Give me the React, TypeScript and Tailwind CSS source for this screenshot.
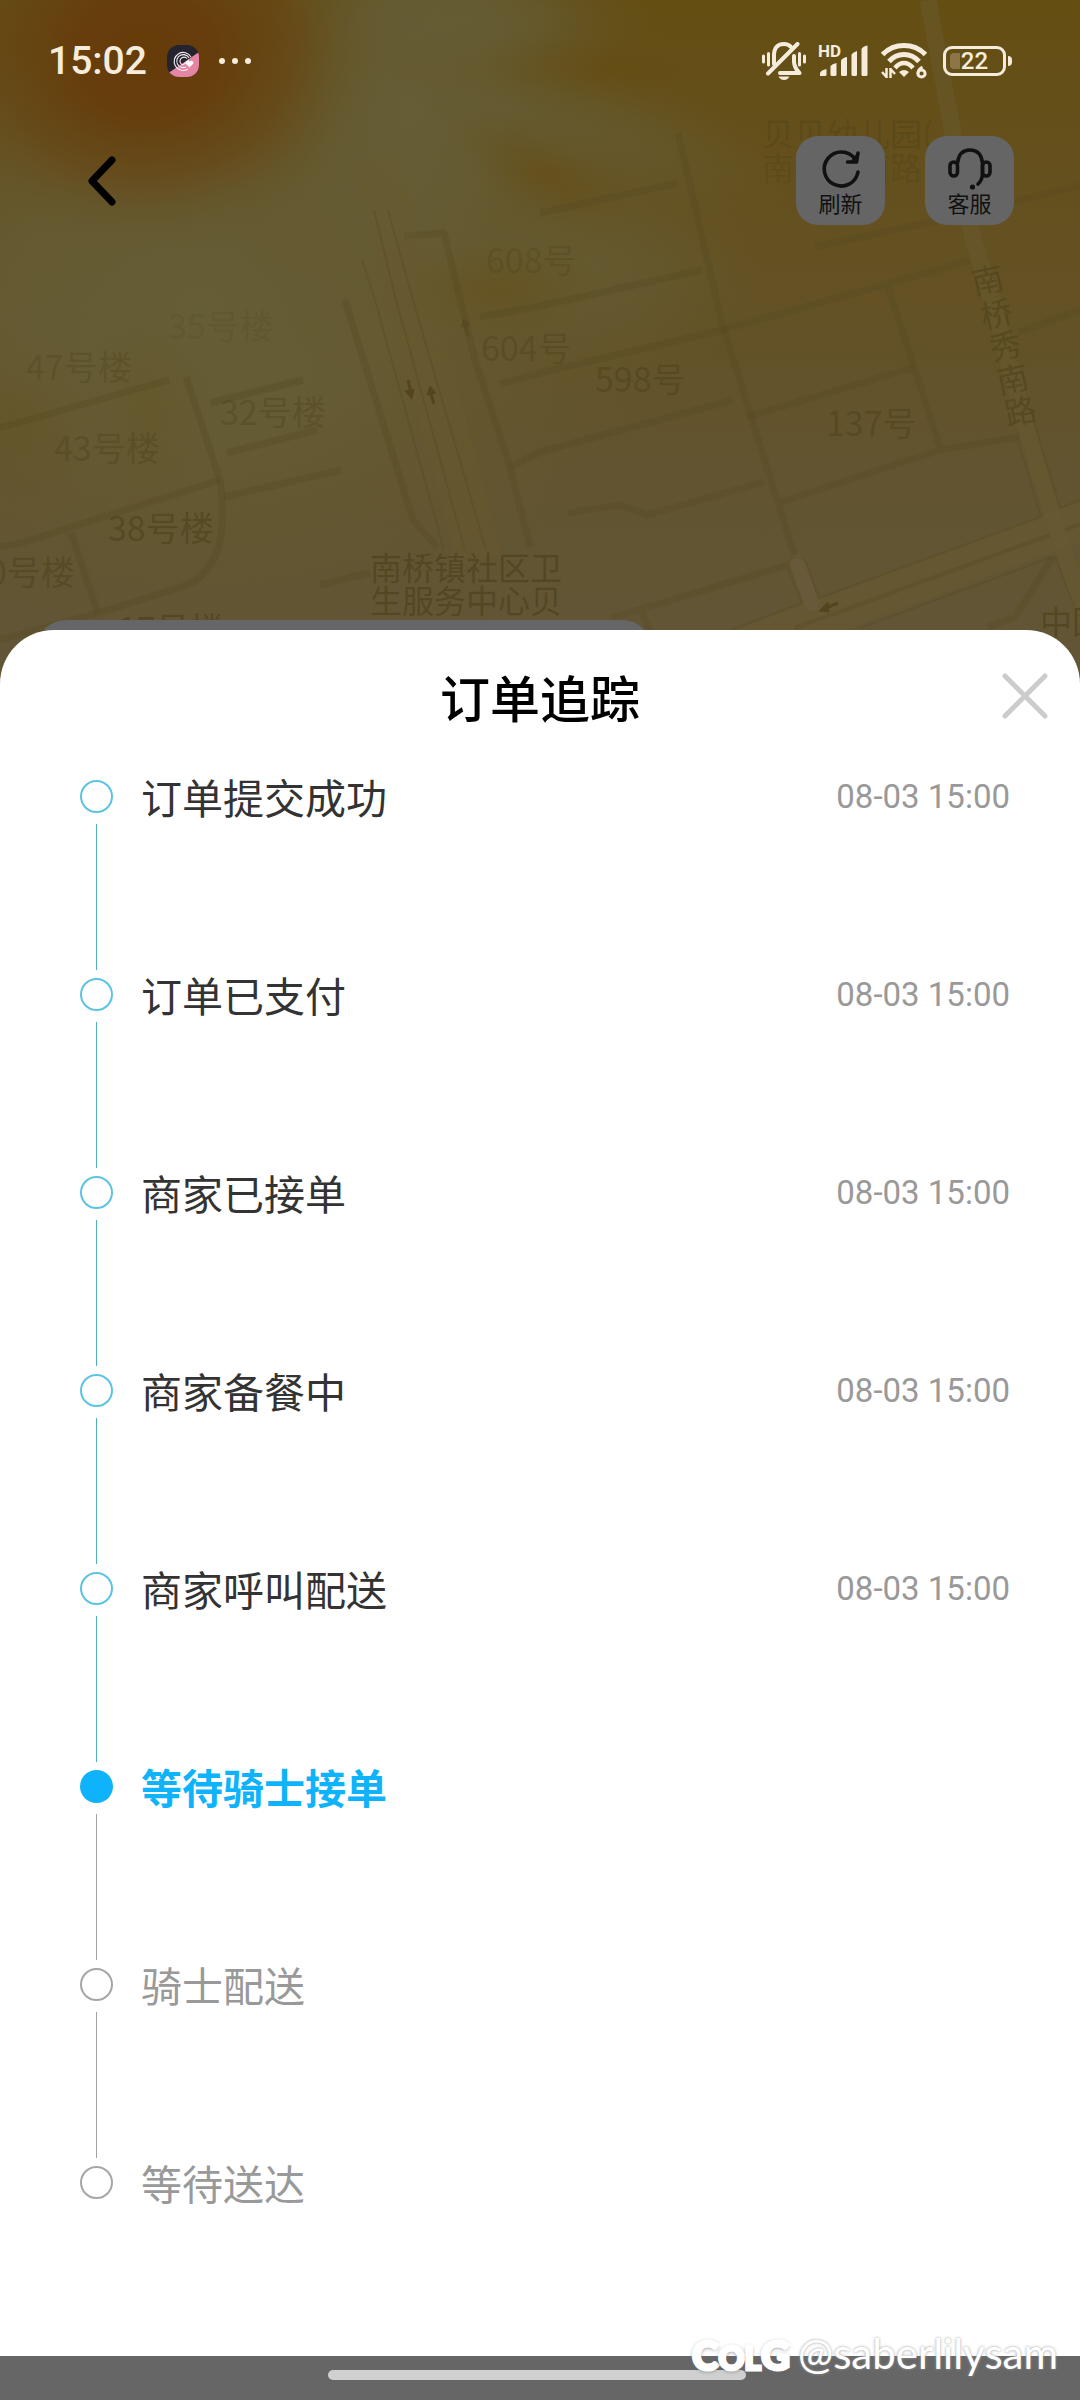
type StepState = 'done' | 'active' | 'pending';

interface Step {
  title: string;
  time?: string;
  state: StepState;
}

const STEPS: Step[] = [
  { title: '订单提交成功', time: '08-03 15:00', state: 'done' },
  { title: '订单已支付', time: '08-03 15:00', state: 'done' },
  { title: '商家已接单', time: '08-03 15:00', state: 'done' },
  { title: '商家备餐中', time: '08-03 15:00', state: 'done' },
  { title: '商家呼叫配送', time: '08-03 15:00', state: 'done' },
  { title: '等待骑士接单', state: 'active' },
  { title: '骑士配送', state: 'pending' },
  { title: '等待送达', state: 'pending' },
];

const DOT: Record<StepState, string> = {
  done: 'border-2 border-[#5cc3e2]',
  active: 'bg-[#0eb3fb]',
  pending: 'border-2 border-[#a6a6a6]',
};

const LINE: Record<StepState, string> = {
  done: 'bg-[#4fb0c6]',
  active: 'bg-[#a3a3a3]',
  pending: 'bg-[#a3a3a3]',
};

const TITLE: Record<StepState, string> = {
  done: 'text-[#333333]',
  active: 'text-[#0eb3fb] font-bold',
  pending: 'text-[#999999]',
};

const MAP_LABELS = [
  { text: '608号', x: 486, y: 273, o: 0.4 },
  { text: '604号', x: 481, y: 361, o: 0.55 },
  { text: '598号', x: 595, y: 392, o: 0.7 },
  { text: '137号', x: 826, y: 436, o: 0.7 },
  { text: '47号楼', x: 26, y: 380, o: 0.45 },
  { text: '35号楼', x: 168, y: 339, o: 0.25 },
  { text: '43号楼', x: 54, y: 461, o: 0.55 },
  { text: '32号楼', x: 220, y: 425, o: 0.5 },
  { text: '38号楼', x: 108, y: 541, o: 0.8 },
  { text: '0号楼', x: -12, y: 585, o: 0.7 },
  { text: '17号楼', x: 118, y: 642, o: 0.9 },
];

const PLACE_LABELS = [
  { text: '南桥镇社区卫', x: 370, y: 580, o: 0.9 },
  { text: '生服务中心贝', x: 370, y: 613, o: 0.9 },
  { text: '贝贝幼儿园(', x: 762, y: 146, o: 0.55 },
  { text: '南桥秀南路', x: 762, y: 180, o: 0.45 },
  { text: '中国', x: 1040, y: 634, o: 0.9 },
];

const ROAD_NAME = [
  { text: '南', x: 987, y: 278 },
  { text: '桥', x: 996, y: 312 },
  { text: '秀', x: 1005, y: 344 },
  { text: '南', x: 1012, y: 377 },
  { text: '路', x: 1020, y: 409 },
];

const LANES = [
  'M0 428 L169 380',
  'M186 377 L220 480 Q226 512 219 545 Q212 572 188 585 L98 613 L0 640',
  'M0 547 L21 543 L220 480',
  'M71 533 L98 613',
  'M224 497 L341 470',
  'M227 453 L317 430',
  'M210 403 L303 380',
  'M345 300 L413 520 L437 547',
  'M404 236 L444 233 L475 360 L510 467 L530 547',
  'M510 467 L540 452 L733 400',
  'M320 585 L370 573',
  'M678 133 L722 323 L795 557',
  'M540 213 L678 183',
  'M480 317 L540 306 L702 270',
  'M500 384 L540 373 L722 330 L891 283 L970 260',
  'M888 287 L915 370 L940 447',
  'M747 417 L915 367',
  'M781 502 L940 450 L1019 437',
  'M568 513 L619 505 L647 515 L764 482',
  'M612 618 L788 565',
  'M643 613 L652 640',
  'M1019 332 L1080 310',
  'M815 247 L926 223 L1080 186',
  'M1053 557 L1015 617 L988 627',
];

function MapBackdrop() {
  return (
    <svg
      className="absolute inset-x-0 top-0 h-[720px] w-full"
      viewBox="0 0 1080 720"
      preserveAspectRatio="xMidYMin slice"
      aria-hidden="true"
    >
      <defs>
        <linearGradient id="ground" x1="0" y1="0" x2="0" y2="1">
          <stop offset="0" stopColor="#644e12" />
          <stop offset="0.35" stopColor="#645122" />
          <stop offset="0.65" stopColor="#625430" />
          <stop offset="1" stopColor="#615639" />
        </linearGradient>
        <radialGradient id="ember">
          <stop offset="0" stopColor="#663c09" />
          <stop offset="0.3" stopColor="#663d0b" stopOpacity="0.95" />
          <stop offset="0.6" stopColor="#664412" stopOpacity="0.6" />
          <stop offset="0.82" stopColor="#664f20" stopOpacity="0.2" />
          <stop offset="1" stopColor="#665a30" stopOpacity="0" />
        </radialGradient>
        <radialGradient id="olive">
          <stop offset="0" stopColor="#655d36" />
          <stop offset="0.4" stopColor="#655c35" stopOpacity="0.8" />
          <stop offset="0.75" stopColor="#655930" stopOpacity="0.3" />
          <stop offset="1" stopColor="#65562a" stopOpacity="0" />
        </radialGradient>
        <radialGradient id="gold">
          <stop offset="0" stopColor="#664c12" stopOpacity="0.75" />
          <stop offset="0.6" stopColor="#654f19" stopOpacity="0.25" />
          <stop offset="1" stopColor="#655222" stopOpacity="0" />
        </radialGradient>
      </defs>
      <rect width="1080" height="720" fill="url(#ground)" />
      <ellipse cx="200" cy="310" rx="480" ry="330" fill="url(#olive)" />
      <ellipse cx="410" cy="110" rx="200" ry="290" fill="url(#olive)" />
      <ellipse cx="590" cy="130" rx="210" ry="70" fill="url(#olive)" opacity="0.6" transform="rotate(18 590 130)" />
      <ellipse cx="590" cy="270" rx="180" ry="120" fill="url(#olive)" opacity="0.6" />
      <ellipse cx="470" cy="20" rx="190" ry="70" fill="url(#olive)" opacity="0.7" />
      <ellipse cx="620" cy="70" rx="180" ry="44" fill="url(#gold)" opacity="0.7" />
      <ellipse cx="545" cy="175" rx="110" ry="46" fill="url(#gold)" opacity="0.75" transform="rotate(28 545 175)" />
      <ellipse cx="500" cy="290" rx="110" ry="50" fill="url(#gold)" opacity="0.6" />
      <ellipse cx="20" cy="430" rx="90" ry="110" fill="url(#gold)" opacity="0.3" />
      <ellipse cx="150" cy="410" rx="70" ry="110" fill="url(#gold)" opacity="0.3" />
      <ellipse cx="255" cy="20" rx="130" ry="170" fill="url(#gold)" />
      <ellipse cx="145" cy="55" rx="240" ry="205" fill="url(#ember)" />

      <g fill="none" stroke="#554a20" strokeOpacity="0.33" strokeWidth="7" strokeLinejoin="round">
        {LANES.map((d) => (
          <path key={d} d={d} />
        ))}
      </g>

      {/* main roads */}
      <g fill="none" strokeLinejoin="round">
        <path d="M375 160 L410 300 L480 560" stroke="#69582f" strokeOpacity="0.35" strokeWidth="46" />
        <path d="M928 0 L972 235 L992 300 L1026 427 L1057 530 L1084 612" stroke="#68592f" strokeOpacity="0.5" strokeWidth="17" />
        <path d="M700 662 L830 615 L1090 518" stroke="#67592f" strokeOpacity="0.5" strokeWidth="38" />
        <path d="M797 562 L812 604" stroke="#68593a" strokeWidth="15" strokeLinecap="round" />
        <g stroke="#574a22" strokeOpacity="0.4" strokeWidth="2">
          <path d="M362 260 L375 300 L444 550" />
          <path d="M374 210 L396 300 L465 550" />
          <path d="M388 210 L413 300 L486 550" />
          <path d="M733 629 L802 603 L788 568 Q788 557 797 557 Q805 557 808 568 L819 598 L1041 517 L1017 437" />
          <path d="M1035 425 L1060 508 L1080 500" />
          <path d="M860 628 L1055 556 L1074 606" />
          <path d="M795 628 L1050 535" strokeWidth="4" />
          <path d="M1065 530 L1080 524" strokeWidth="4" />
        </g>
      </g>
      <g stroke="#53401c" strokeWidth="3" fill="#53401c" opacity="0.8">
        <path d="M408 380 L411 392" />
        <path d="M405 391 L414 389 L412 399 Z" strokeWidth="1" />
        <path d="M434 404 L431 394" />
        <path d="M427 395 L436 393 L430 386 Z" strokeWidth="1" />
        <path d="M468 336 L465 326" strokeOpacity="0.5" />
        <path d="M461 327 L470 325 L464 319 Z" strokeWidth="1" fillOpacity="0.5" strokeOpacity="0.5" />
        <path d="M838 603 L826 608" />
        <path d="M819 611 L828 602 L829 612 Z" strokeWidth="1" />
      </g>

      <g fill="#4b4018" fontFamily="'Noto Sans CJK SC', sans-serif">
        {MAP_LABELS.map((l) => (
          <text key={l.text} x={l.x} y={l.y} fontSize="34" fillOpacity={l.o * 0.7}>{l.text}</text>
        ))}
        {PLACE_LABELS.map((l) => (
          <text key={l.text} x={l.x} y={l.y} fontSize="32" fillOpacity={l.o * 0.7}>{l.text}</text>
        ))}
        {ROAD_NAME.map((l) => (
          <text key={l.y} x={l.x} y={l.y} fontSize="32" fillOpacity="0.55" textAnchor="middle" dominantBaseline="central"
            transform={`rotate(-12 ${l.x} ${l.y})`}>{l.text}</text>
        ))}
      </g>
    </svg>
  );
}

function AppBadge() {
  return (
    <svg className="h-8 w-8" viewBox="0 0 32 32" aria-hidden="true">
      <defs>
        <clipPath id="badge"><rect width="32" height="32" rx="12" /></clipPath>
      </defs>
      <g clipPath="url(#badge)">
        <rect width="32" height="32" fill="#25232f" />
        <path d="M32 7 L0 29 V32 H32 Z" fill="#e584a3" />
      </g>
      <g fill="none" stroke="#f4eef2" strokeWidth="1.1">
        <path d="M24 12 A9 9 0 1 0 21 24" />
        <path d="M22 13 A6.5 6.5 0 1 0 19 22" />
        <path d="M20 13.5 A4 4 0 1 0 16 20 L22 15" />
      </g>
      <path d="M22.5 22.5 L18.8 18.8 A2.2 2.2 0 0 1 22.5 16.5 A2.2 2.2 0 0 1 26.2 18.8 Z" fill="#fff" />
    </svg>
  );
}

function MutedBell() {
  return (
    <svg className="h-[38px] w-11" viewBox="0 0 44 38" fill="none" stroke="#f6ecdc" strokeLinecap="round" aria-hidden="true">
      <path d="M1.5 14 V20 M6.5 11.5 V23 M37.5 11.5 V23 M42.5 14 V20" strokeWidth="3" />
      <path d="M12 22 V15 Q11.5 2 22 2 Q26.5 2 29 5" strokeWidth="4" />
      <path d="M32 14 V20 Q32.500 26 37.5 31 H18" strokeWidth="4" strokeLinejoin="round" />
      <path d="M35.5 2 L6 31.5" strokeWidth="4" />
      <path d="M16.5 34.5 H27.5 Q25.5 38 22 38 Q18.5 38 16.5 34.5 Z" fill="#f6ecdc" stroke="none" />
    </svg>
  );
}

function Signal() {
  return (
    <svg className="h-[34px] w-[51px] overflow-visible" viewBox="0 0 51 34" fill="#f6ecdc" aria-hidden="true">
      <text x="0" y="13" fontSize="17" fontWeight="700" fontFamily="Roboto, sans-serif">HD</text>
      <path d="M2 32 V29 Q3 26 8.5 25 V30.5 Q8.5 32 7 32 Z" />
      <path d="M12.5 22 Q14 20 18.5 19 V30.5 Q18.5 32 17 32 H14 Q12.5 32 12.5 30.5 Z" />
      <path d="M23 16.5 Q24 14 29 13 V30.5 Q29 32 27.5 32 H24.5 Q23 32 23 30.5 Z" />
      <path d="M33.5 10.5 Q35 8 39 7 V30.5 Q39 32 37.5 32 H35 Q33.5 32 33.5 30.5 Z" />
      <path d="M43.5 5 Q45 2 49.5 1.5 V30.5 Q49.5 32 48 32 H45 Q43.5 32 43.5 30.5 Z" />
    </svg>
  );
}

function WifiSix() {
  return (
    <svg className="h-9 w-[46px]" viewBox="0 0 46 36" fill="none" stroke="#f6ecdc" aria-hidden="true">
      <path d="M1.5 11.5 Q10.5 2.5 23 2.5 Q35.5 2.5 44.5 11.5" strokeWidth="5" />
      <path d="M8 18.5 Q14 11.5 23 11.5 Q32 11.5 38 18.5" strokeWidth="5" />
      <path d="M14 25 Q18 20 23 20 Q28 20 32 25" strokeWidth="4.5" />
      <path d="M18 29 Q23 25 28 29 L23 34 Z" fill="#f6ecdc" stroke="none" />
      <path d="M5.5 25 V35 M9.500 35 V25 M5.5 34 L1 29 M9.500 26 L14 31" strokeWidth="2.5" />
      <path d="M41.5 24 Q37 26 37 30.5" strokeWidth="3" />
      <circle cx="40.5" cy="30.5" r="3.6" strokeWidth="3" />
    </svg>
  );
}

function Battery() {
  return (
    <div className="flex items-center gap-0.5">
      <div className="relative flex h-[30px] w-[63px] items-center justify-center rounded-[9px] border-3 border-[#f6ecdc]">
        <span className="absolute inset-y-1 left-1 w-2.5 rounded-l-[4px] bg-[#8d7547]" />
        <span className="relative font-[Roboto,sans-serif] text-[24px] leading-none font-medium">22</span>
      </div>
      <span className="h-2.5 w-1 rounded-r-full bg-[#f6ecdc]" />
    </div>
  );
}

function StatusBar() {
  return (
    <div className="flex h-[122px] items-center justify-between pr-17 pl-12 text-[#f6ecdc]">
      <div className="flex items-center">
        <span className="font-[Roboto,sans-serif] text-[39px] leading-none font-medium">15:02</span>
        <span className="ml-5"><AppBadge /></span>
        <span className="ml-5 flex gap-[7px]">
          <i className="h-1.5 w-1.5 rounded-full bg-[#f6ecdc]" />
          <i className="h-1.5 w-1.5 rounded-full bg-[#f6ecdc]" />
          <i className="h-1.5 w-1.5 rounded-full bg-[#f6ecdc]" />
        </span>
      </div>
      <div className="flex items-center gap-3">
        <MutedBell />
        <Signal />
        <WifiSix />
        <span className="ml-1"><Battery /></span>
      </div>
    </div>
  );
}

function RefreshIcon() {
  return (
    <svg className="h-[42px] w-11" viewBox="0 0 44 42" fill="none" stroke="#111" strokeWidth="3.6" strokeLinecap="round" strokeLinejoin="round" aria-hidden="true">
      <path d="M39 24 A17 17 0 1 1 36 11" />
      <path d="M39 5 L37.5 14 H28.500" />
      <path d="M38.500 6 L33 13" strokeWidth="2" />
    </svg>
  );
}

function HeadsetIcon() {
  return (
    <svg className="h-[42px] w-11" viewBox="0 0 44 42" fill="none" stroke="#111" strokeWidth="3.6" strokeLinecap="round" aria-hidden="true">
      <rect x="2" y="14" width="7.5" height="14" rx="3.7" />
      <rect x="34.5" y="14" width="7.5" height="14" rx="3.7" />
      <path d="M9.5 15 Q11 2 22 2 Q33 2 34.5 15 V25 Q34.5 32 30 36" />
      <circle cx="24.5" cy="39" r="2.6" fill="#111" stroke="none" />
    </svg>
  );
}

function NavButton({ label, icon: Icon }: { label: string; icon: React.ElementType }) {
  return (
    <button className="flex h-[89px] w-[89px] flex-col items-center justify-center rounded-[22px] bg-[#656565] text-[22px] leading-6 text-[#111]">
      <Icon />
      <span>{label}</span>
    </button>
  );
}

function TimelineRow({ step, last }: { step: Step; last: boolean }) {
  return (
    <li className="flex items-start">
      <div className="flex w-[33px] flex-col items-center">
        <span className={`h-[33px] w-[33px] rounded-full ${DOT[step.state]}`} />
        {!last && <span className={`mt-[11px] mb-2 h-[146px] w-px ${LINE[step.state]}`} />}
      </div>
      <span className={`ml-7 flex-1 text-[41px] leading-[33px] ${TITLE[step.state]}`}>{step.title}</span>
      {step.time && <time className="font-[Roboto,sans-serif] text-[33px] leading-[33px] text-[#999999]">{step.time}</time>}
    </li>
  );
}

function Watermark() {
  return (
    <div className="absolute right-[22px] bottom-[22px] flex items-end gap-2 font-[Lato,sans-serif] text-white">
      <span className="flex items-baseline text-[40px] leading-10 font-black [-webkit-text-stroke:3px_white] [text-shadow:0_1px_4px_#666]">
        C<span className="text-[32px]">OL</span>G
      </span>
      <span className="text-[42px] leading-[50px] [text-shadow:0_0_3px_#999]">@saberlilysam</span>
    </div>
  );
}

export default function App() {
  return (
    <div className="relative flex min-h-screen flex-col overflow-hidden bg-[#666666] font-['Noto_Sans_CJK_SC',sans-serif]">
      <MapBackdrop />

      <header className="relative flex-1">
        <StatusBar />
        <div className="flex items-center justify-between pt-3.5 pr-[66px] pl-[76px]">
          <button aria-label="返回" className="flex h-[89px] w-12 items-center justify-center">
            <svg className="h-14 w-9" viewBox="0 0 36 56" fill="none" stroke="#000" strokeWidth="7" strokeLinecap="round" strokeLinejoin="round">
              <path d="M30 7 L10 28 L30 49" />
            </svg>
          </button>
          <div className="flex gap-10">
            <NavButton label="刷新" icon={RefreshIcon} />
            <NavButton label="客服" icon={HeadsetIcon} />
          </div>
        </div>
        {/* edge of the order card under the sheet */}
        <div className="absolute bottom-0 left-9 h-2.5 w-[57%] overflow-hidden">
          <div className="h-20 rounded-[30px] bg-[#666668]" />
        </div>
      </header>

      <section className="relative rounded-t-[54px] bg-white pb-[157px]">
        <div className="relative flex h-[132px] items-center justify-center">
          <h1 className="text-[50px] leading-none font-medium text-black">订单追踪</h1>
          <button aria-label="关闭" className="absolute right-[27px] flex h-14 w-14 items-center justify-center">
            <svg className="h-12 w-12" viewBox="0 0 48 48" stroke="#cccccc" strokeWidth="5" strokeLinecap="round">
              <path d="M4 4 L44 44 M44 4 L4 44" />
            </svg>
          </button>
        </div>
        <ol className="pt-[18px] pr-[70px] pl-20">
          {STEPS.map((step, i) => (
            <TimelineRow key={step.title} step={step} last={i === STEPS.length - 1} />
          ))}
        </ol>
      </section>

      <footer className="relative flex h-11 items-start justify-center pt-3.5 pr-1.5">
        <span className="h-2.5 w-[418px] rounded-full bg-[#d0d0d0]" />
      </footer>
      <Watermark />
    </div>
  );
}
